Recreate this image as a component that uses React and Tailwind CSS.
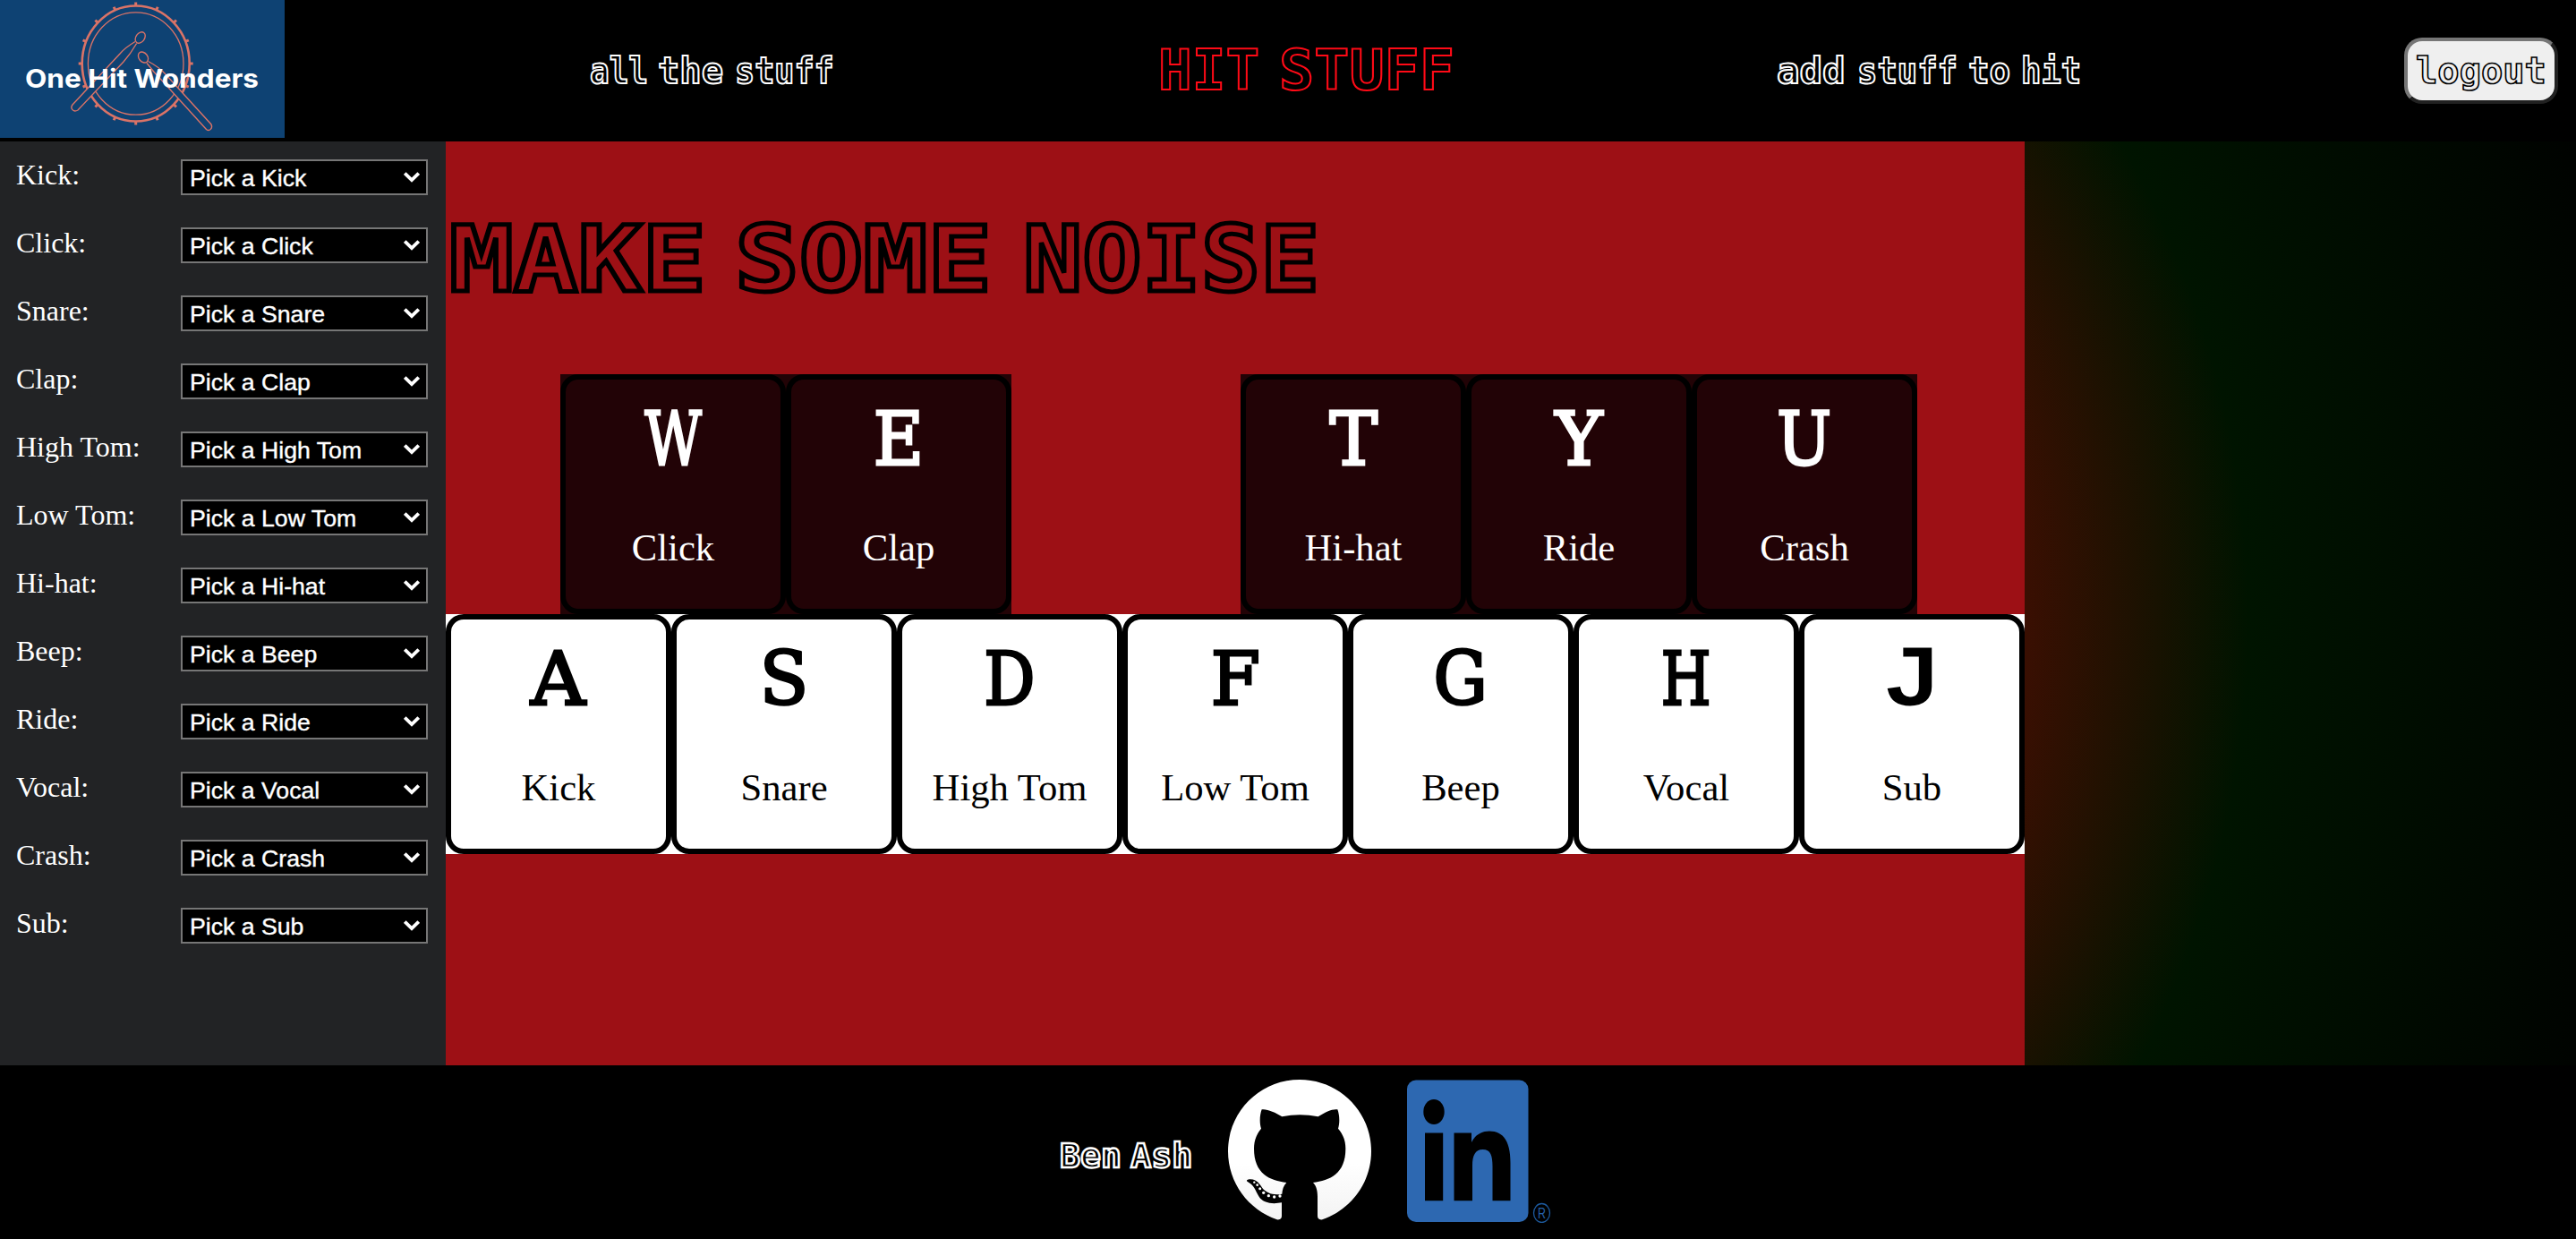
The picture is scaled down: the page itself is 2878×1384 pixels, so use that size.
const SOUNDS = ["Kick", "Click", "Snare", "Clap", "High Tom", "Low Tom", "Hi-hat", "Beep", "Ride", "Vocal", "Crash", "Sub"];

const SERIF = "font-['DejaVu_Serif',serif] text-[82px] [-webkit-text-stroke:3px_currentColor] ";

const UPPER_LEFT = [
  { key: "W", name: "Click", fit: SERIF + "scale-x-[0.75]" },
  { key: "E", name: "Clap", fit: SERIF + "scale-x-[0.94]" },
];
const UPPER_RIGHT = [
  { key: "T", name: "Hi-hat", fit: SERIF + "scale-x-[0.98]" },
  { key: "Y", name: "Ride", fit: SERIF + "scale-x-[0.97]" },
  { key: "U", name: "Crash", fit: SERIF + "scale-x-[0.88]" },
];
const LOWER = [
  { key: "A", name: "Kick", fit: SERIF + "scale-x-[1.03]" },
  { key: "S", name: "Snare", fit: SERIF + "scale-x-[0.97]" },
  { key: "D", name: "High Tom", fit: SERIF + "scale-x-[0.87]" },
  { key: "F", name: "Low Tom", fit: SERIF + "scale-x-[0.97]" },
  { key: "G", name: "Beep", fit: SERIF + "scale-x-[0.92]" },
  { key: "H", name: "Vocal", fit: SERIF + "scale-x-[0.78]" },
  { key: "J", name: "Sub", fit: "font-['Liberation_Mono',monospace] text-[92px] [-webkit-text-stroke:3px_currentColor] translate-y-[3px] scale-x-[1.25]" },
];

// Outlined display text, one box per word so that each word keeps its own width.
function Outline({ words, className }) {
  return (
    <span className={"flex font-['DejaVu_Sans_Mono',monospace] font-bold text-transparent " + className}>
      {words.map(([word, box, fit]) => (
        <span key={word} className={"shrink-0 " + box}>
          <span className={"inline-block origin-left " + fit}>{word}</span>
        </span>
      ))}
    </span>
  );
}

function Logo() {
  const ticks = Array.from({ length: 16 }, (_, i) => (i * Math.PI) / 8);
  return (
    <svg viewBox="0 0 318 154" className="h-[154px] w-[318px] shrink-0 bg-[#0e4273]" fill="none" stroke="#da7367">
      <ellipse cx="151.7" cy="71" rx="60" ry="64.5" strokeWidth="2.6" />
      <ellipse cx="151.7" cy="71" rx="53.3" ry="57.2" strokeWidth="1.3" />
      {ticks.map((a) => (
        <line
          key={a}
          x1={151.7 + 60 * Math.cos(a)}
          y1={71 + 64.5 * Math.sin(a)}
          x2={151.7 + 64 * Math.cos(a)}
          y2={71 + 68.5 * Math.sin(a)}
          strokeWidth="3"
        />
      ))}
      <g strokeWidth="1.4" fill="#0e4273">
        <path d="M151 46.5 Q140 53 134 60 L81 117 C78 121 82 126 87 123 L138 69 Q146 60 152.6 48.5" />
        <ellipse cx="156.7" cy="42" rx="4.8" ry="6.8" transform="rotate(36 156.7 42)" />
        <path d="M165.5 68.5 Q178 75 185 83 L236 139 C238 143 234 147.500 230.500 144.500 L181 90 Q172 81 164 70.500" />
        <ellipse cx="160" cy="64" rx="4.8" ry="6.600" transform="rotate(-38 160 64)" />
      </g>
      <text x="28" y="98" textLength="261" lengthAdjust="spacingAndGlyphs" stroke="none" fill="#fff" className="font-['Inter',sans-serif] text-[29px] font-bold">
        One Hit Wonders
      </text>
    </svg>
  );
}

function PickRow({ name }) {
  return (
    <div className="flex h-10 items-center">
      <span className="w-[184px] -translate-y-[3px] font-['Liberation_Serif',serif] text-[32px] leading-9">{name}:</span>
      <div className="flex h-10 w-[276px] items-center justify-between border-2 border-[#767676] bg-black pr-[7px] pl-2 font-['Liberation_Sans',sans-serif] text-[26.67px] leading-8">
        <span className="translate-y-px [-webkit-text-stroke:0.4px_white]">Pick a {name}</span>
        <svg viewBox="0 0 18 12" className="h-3 w-[18px]" fill="none" stroke="#fff" strokeWidth="3.8">
          <path d="M1.300 1.500 L9 9 L16.700 1.500" />
        </svg>
      </div>
    </div>
  );
}

function Pad({ item, dark }) {
  return (
    <div className={"flex h-[268px] w-[252px] flex-col items-center rounded-[20px] border-[6px] border-black " + (dark ? "text-white" : "text-black")}>
      <span className={"mt-[17px] inline-block h-[100px] leading-[100px] " + item.fit}>{item.key}</span>
      <span className="mt-[47px] font-['Liberation_Serif',serif] text-[42.67px] leading-[48px]">{item.name}</span>
    </div>
  );
}

function PadRow({ items, dark }) {
  return (
    <div className={"flex " + (dark ? "bg-[#220306]" : "bg-white")}>
      {items.map((item) => (
        <Pad key={item.key} item={item} dark={dark} />
      ))}
    </div>
  );
}

function GithubMark() {
  return (
    <svg viewBox="36 33 480 480" className="h-[160px] w-[160px]">
      <defs>
        <linearGradient id="shine" x1="0" y1="0" x2="0" y2="1">
          <stop offset="0.6" stopColor="#fff" />
          <stop offset="1" stopColor="#f3f3f3" />
        </linearGradient>
      </defs>
      <path
        fill="url(#shine)"
        d="M276 33 C143 33 36 140 36 273 C36 379 105 469 200 502 Q216 504 216 490 L216 445 C185 451 152 447 139 424 C127 402 124 388 105 377 Q94 371 102 368 C131 362 143 385 151 396 C165 414 188 421 217 416 C218 402 222 388 232 378 C176 371 123 349 123 264 C123 235 133 214 147 197 C141 178 142 152 149 133 C166 130 193 142 217 157 Q276 144 338 157 C362 141 387 130 403 133 C410 152 411 178 405 197 C420 214 430 235 430 264 C430 349 377 371 321 378 C332 389 336 405 336 425 L336 490 Q336 504 352 502 C448 469 516 379 516 273 C516 140 409 33 276 33 Z"
      />
      <g fill="#fff">
        <circle cx="124" cy="377" r="3.500" />
        <circle cx="134" cy="386" r="4" />
        <circle cx="143" cy="398" r="4.500" />
        <circle cx="155" cy="412" r="5" />
        <circle cx="172" cy="422" r="5" />
        <circle cx="191" cy="426" r="5" />
        <circle cx="210" cy="423" r="5" />
      </g>
    </svg>
  );
}

function LinkedInMark() {
  return (
    <svg viewBox="0 0 162 160" className="h-[160px] w-[162px]">
      <rect x="0" y="0.500" width="135.500" height="158.500" rx="10" fill="#2d68b1" />
      <ellipse cx="30" cy="36" rx="11.700" ry="14" fill="#000" />
      <path d="M20 59.500H40.200V135.300H20Z M52.500 59.500H72V70C76 62 83 57.500 92 57.500C109 57.500 115.500 71 115.500 93V135.300H95.500V97C95.500 85 93.500 78 84.500 78C76 78 73 85 73 96V135.300H52.500Z" fill="#000" />
      <ellipse cx="150.500" cy="149" rx="9" ry="10.500" fill="none" stroke="#1d5a9e" strokeWidth="1.300" />
      <text x="146" y="155" fill="#2561a8" className="font-['Liberation_Sans',sans-serif] text-[16px]" textLength="9" lengthAdjust="spacingAndGlyphs">R</text>
    </svg>
  );
}

export default function App() {
  return (
    <div className="flex h-[1384px] w-[2878px] flex-col overflow-hidden bg-[radial-gradient(circle_at_1439px_692px,#3a0f02_823px,#001400_1073px,#000000_1597px)] text-white">
      <header className="flex h-[158px] items-start bg-black">
        <Logo />
        <nav className="flex h-[158px] items-center">
          <div className="ml-[341px] w-[272px]">
            <Outline
              className="text-[40px] leading-[52px] [-webkit-text-stroke:2px_white]"
              words={[
                ["all", "w-[76px]", "scale-x-[0.9]"],
                ["the", "w-[86px]", "scale-x-[1.01]"],
                ["stuff", "w-[110px]", "scale-x-[0.92]"],
              ]}
            />
          </div>
          <div className="ml-[363px] w-[330px]">
            <Outline
              className="text-[62px] leading-[70px] [-webkit-text-stroke:2px_#ff0a16]"
              words={[
                ["HIT", "w-[135px]", "scale-x-[1.01]"],
                ["STUFF", "w-[195px]", "scale-x-[1.05]"],
              ]}
            />
          </div>
          <div className="ml-[361px] w-[340px]">
            <Outline
              className="text-[40px] leading-[52px] [-webkit-text-stroke:2px_white]"
              words={[
                ["add", "w-[90px]", "scale-x-[1.06]"],
                ["stuff", "w-[124px]", "scale-x-[0.93]"],
                ["to", "w-[59px]", "scale-x-[0.98]"],
                ["hit", "w-[64px]", "scale-x-[0.93]"],
              ]}
            />
          </div>
        </nav>
        <button className="mt-[42px] ml-[361px] flex h-[74px] w-[172px] items-center rounded-[20px] border-4 border-t-[#767676] border-r-[#212121] border-b-[#212121] border-l-[#767676] bg-[#efefef] pl-1.5">
          <Outline
            className="text-[40px] leading-[52px] [-webkit-text-stroke:1.6px_black]"
            words={[["logout", "w-[150px]", "scale-x-[1.01]"]]}
          />
        </button>
      </header>

      <main className="flex h-[1032px]">
        <aside className="flex w-[498px] flex-col gap-9 bg-[#222325] pt-5 pl-[18px]">
          {SOUNDS.map((name) => (
            <PickRow key={name} name={name} />
          ))}
        </aside>
        <section className="w-[1764px] bg-[#9d1015]">
          <h1 className="h-[260px] pt-[68px] pl-1">
            <Outline
              className="text-[101px] leading-[128px] [-webkit-text-stroke:5px_black]"
              words={[
                ["MAKE", "w-[319px]", "scale-x-[1.18]"],
                ["SOME", "w-[322px]", "scale-x-[1.18]"],
                ["NOISE", "w-[330px]", "scale-x-[1.09]"],
              ]}
            />
          </h1>
          <div className="flex gap-64 pl-32">
            <PadRow items={UPPER_LEFT} dark />
            <PadRow items={UPPER_RIGHT} dark />
          </div>
          <PadRow items={LOWER} />
        </section>
      </main>

      <footer className="flex h-[194px] bg-black pt-4">
        <div className="ml-[1184px] w-[188px] pt-[60px]">
          <Outline
            className="text-[37px] leading-[52px] [-webkit-text-stroke:2.4px_white]"
            words={[
              ["Ben", "w-[79px]", "scale-x-[1.03]"],
              ["Ash", "w-[68px]", "scale-x-[1.04]"],
            ]}
          />
        </div>
        <GithubMark />
        <div className="ml-10">
          <LinkedInMark />
        </div>
      </footer>
    </div>
  );
}
